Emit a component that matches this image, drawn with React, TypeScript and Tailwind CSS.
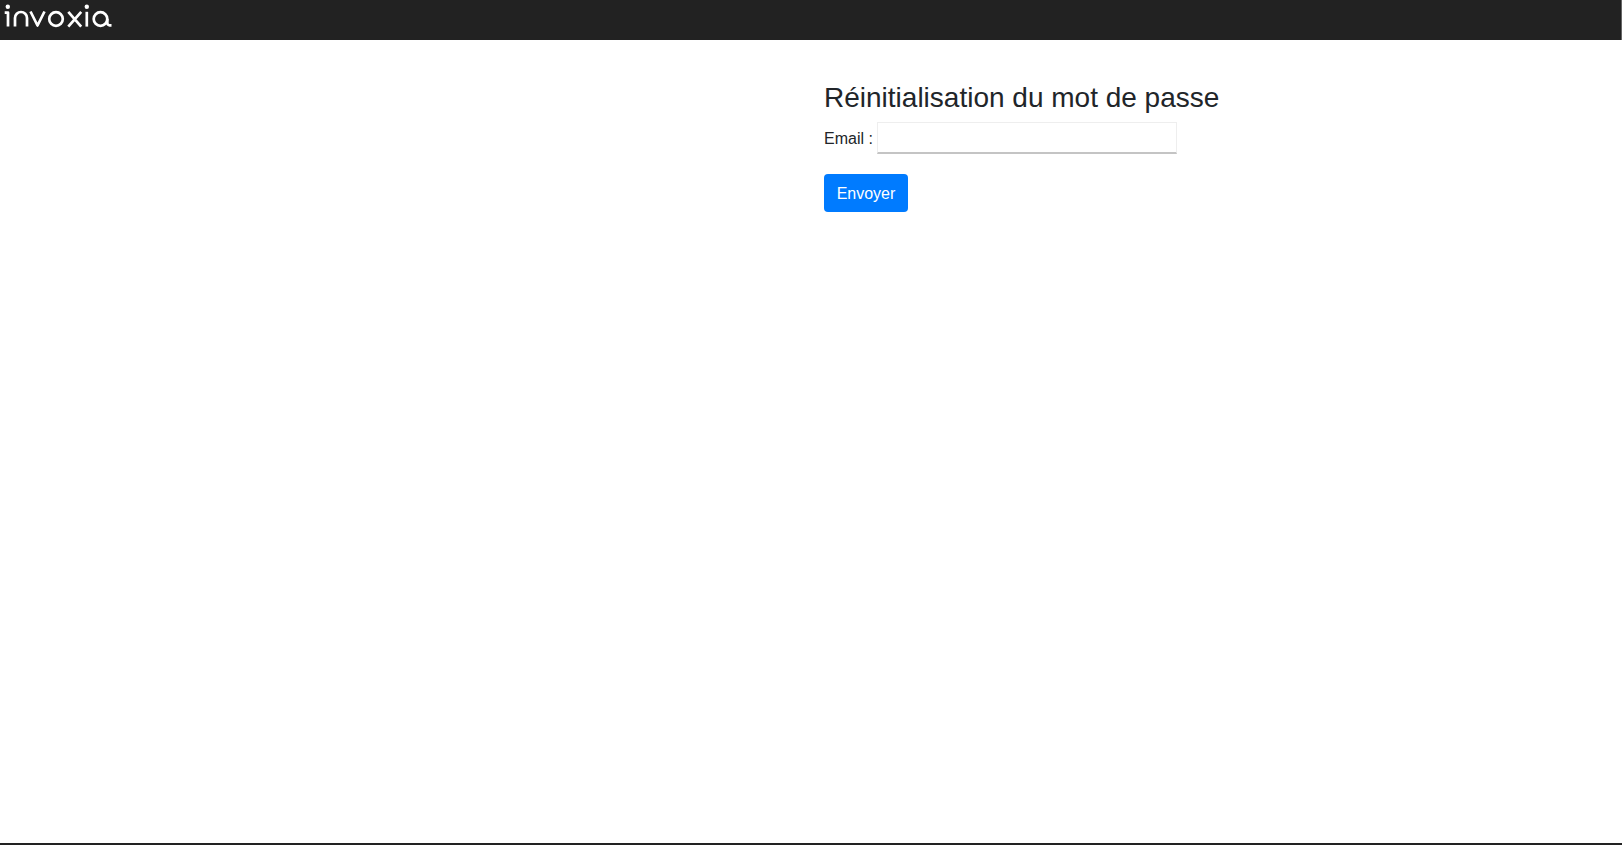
export default function App() {
  return (
    <div className="flex h-[845px] flex-col overflow-hidden bg-white font-['Liberation_Sans',Arial,sans-serif] text-base text-[#212529]">
      {/* Top bar */}
      <header className="flex h-10 shrink-0 items-center border-r border-r-[#666666] bg-[#222222]">
        <InvoxiaLogo />
      </header>

      {/* Reset form */}
      <main className="flex-1 pl-[824px] pt-[41px]">
        <h3 className="mb-[7px] text-[28px] leading-[33.6px] font-normal">Réinitialisation du mot de passe</h3>
        <form>
          <div className="mb-[20px] flex items-center">
            <label className="mr-[5px] translate-y-px leading-6">Email :</label>
            <input
              type="text"
              className="h-[32px] w-[300px] -translate-x-px border border-[#eeeeee] border-b-2 border-b-[#c4c4c4] bg-white outline-none"
            />
          </div>
          <button
            type="button"
            className="h-[38px] w-[84px] rounded-[4px] bg-[#007bff] pt-0.5 text-center text-base leading-6 text-white"
          >
            Envoyer
          </button>
        </form>
      </main>

      <div className="h-0.5 shrink-0 bg-[#222222]" />
    </div>
  );
}

// Logo, drawn by hand
function InvoxiaLogo() {
  return (
    <svg width="116" height="40" viewBox="0 0 116 40" fill="none" stroke="#ffffff" strokeWidth="2.7" strokeLinejoin="round">
      <circle cx="7.8" cy="6.8" r="2.2" fill="#ffffff" stroke="none" />
      <path d="M4.7 12.6H8V26.6" />
      <path d="M15 26.6V18a6 6 0 0 1 12 0V26.6" />
      <path d="M30.5 11.5L37.5 25.5 44.5 11.5" />
      <circle cx="56" cy="19" r="6.8" />
      <path d="M68.3 11.8L81.2 26.6M81.2 11.8L68.3 26.6" />
      <circle cx="86.8" cy="6.8" r="2.2" fill="#ffffff" stroke="none" />
      <path d="M86.8 11.8V26.6" />
      <circle cx="100.5" cy="19" r="6.8" />
      <path d="M107.3 19v4a2.3 2.3 0 0 0 2.3 2.3h1.9" />
    </svg>
  );
}
